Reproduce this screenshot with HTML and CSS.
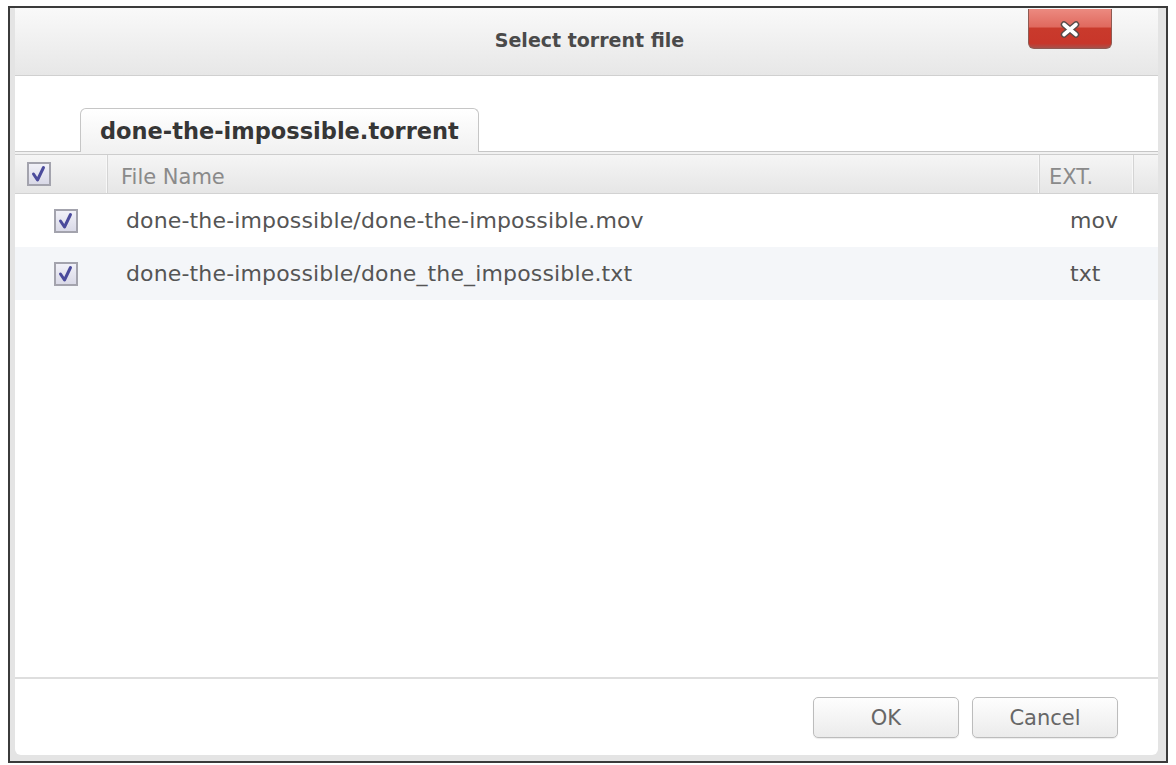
FILE: index.html
```html
<!DOCTYPE html>
<html>
<head>
<meta charset="utf-8">
<title>Select torrent file</title>
<link rel="stylesheet" href="styles.css">
</head>
<body>
<div class="dialog">
  <div class="panel">
    <div class="titlebar">
      <span class="title">Select torrent file</span>
      <button class="close" type="button" aria-label="Close">
        <svg width="20" height="17" viewBox="0 0 20 17">
          <path d="M4 3.5 L16 13.5 M16 3.5 L4 13.5" stroke="#5a4a48" stroke-width="6.5" stroke-linecap="round" fill="none"/>
          <path d="M4 3.5 L16 13.5 M16 3.5 L4 13.5" stroke="#ffffff" stroke-width="3.6" stroke-linecap="round" fill="none"/>
        </svg>
      </button>
    </div>
    <div class="tabbar">
      <div class="tab">done-the-impossible.torrent</div>
    </div>
    <div class="tabstrip"></div>
    <div class="grid">
      <div class="ghead">
        <div class="hcell hcheck"><span class="cb"><svg width="20" height="20" viewBox="0 0 20 20"><path d="M4.5 10 L8.5 16 L14.5 3.5" stroke="#4b4b9c" stroke-width="3" fill="none" stroke-linejoin="round" stroke-linecap="round"/></svg></span></div>
        <div class="hcell hname">File Name</div>
        <div class="hcell hext">EXT.</div>
        <div class="hcell hfill"></div>
      </div>
      <div class="gbody">
        <div class="row">
          <div class="ccheck"><span class="cb"><svg width="20" height="20" viewBox="0 0 20 20"><path d="M4.5 10 L8.5 16 L14.5 3.5" stroke="#4b4b9c" stroke-width="3" fill="none" stroke-linejoin="round" stroke-linecap="round"/></svg></span></div>
          <div class="cname">done-the-impossible/done-the-impossible.mov</div>
          <div class="cext">mov</div>
        </div>
        <div class="row alt">
          <div class="ccheck"><span class="cb"><svg width="20" height="20" viewBox="0 0 20 20"><path d="M4.5 10 L8.5 16 L14.5 3.5" stroke="#4b4b9c" stroke-width="3" fill="none" stroke-linejoin="round" stroke-linecap="round"/></svg></span></div>
          <div class="cname">done-the-impossible/done_the_impossible.txt</div>
          <div class="cext">txt</div>
        </div>
      </div>
    </div>
    <div class="footer">
      <button class="btn" type="button">OK</button>
      <button class="btn" type="button">Cancel</button>
    </div>
  </div>
</div>
</body>
</html>
```
FILE: styles.css
```css
html, body {
  margin: 0;
  padding: 0;
  background: #ffffff;
}

body {
  font-family: "DejaVu Sans", "Liberation Sans", sans-serif;
  width: 1176px;
  height: 765px;
  overflow: hidden;
}

.dialog {
  box-sizing: border-box;
  margin: 6px 0 0 8px;
  width: 1160px;
  height: 757px;
  border: 2px solid #3b3b3b;
  background: #e4e4e4;
  padding: 0 8px 6px 5px;
  display: flex;
}

.panel {
  position: relative;
  flex: 1;
  display: flex;
  flex-direction: column;
  background: #ffffff;
  border-radius: 0 0 6px 6px;
  overflow: hidden;
}

.titlebar {
  position: relative;
  height: 67px;
  flex: none;
  display: flex;
  align-items: center;
  justify-content: center;
  background: linear-gradient(#f9f9f9, #e7e7e7);
  border-bottom: 1px solid #d0d0d0;
}

.title {
  font-weight: bold;
  font-size: 19px;
  color: #4a4a4a;
  padding-left: 6px;
  margin-top: -3px;
}

.close {
  position: absolute;
  top: 1px;
  right: 46px;
  width: 84px;
  height: 40px;
  box-sizing: border-box;
  padding: 0;
  border: 1px solid #8e5a52;
  border-top: none;
  border-radius: 0 0 6px 6px;
  background: linear-gradient(#ec8a80 0%, #e06a5f 45%, #c93a2c 50%, #c8362a 88%, #a8504a 100%);
  display: flex;
  align-items: center;
  justify-content: center;
}

.close svg {
  display: block;
  margin-top: 2px;
}

.tabbar {
  flex: none;
  padding: 32px 0 0 65px;
  border-bottom: 1px solid #c6c6c6;
  display: flex;
}

.tab {
  box-sizing: border-box;
  width: 399px;
  height: 44px;
  margin-bottom: -1px;
  padding: 0 0 0 19px;
  border: 1px solid #c6c6c6;
  border-bottom: none;
  border-radius: 6px 6px 0 0;
  background: linear-gradient(#ffffff, #f1f1f1);
  font-weight: bold;
  font-size: 22.5px;
  color: #363636;
  display: flex;
  align-items: center;
}

.tabstrip {
  flex: none;
  height: 2px;
  background: #f1f1f1;
  border-bottom: 1px solid #cdcdcd;
}

.grid {
  flex: 1;
  display: flex;
  flex-direction: column;
}

.ghead {
  flex: none;
  display: grid;
  grid-template-columns: 93px 932px 94px 1fr;
  height: 38px;
  background: linear-gradient(#f5f5f5, #e6e6e6);
  border-bottom: 1px solid #d2d2d2;
}

.hcell {
  display: flex;
  align-items: center;
  font-size: 21px;
  color: #8a8a8a;
  border-right: 1px solid #d4d4d4;
  box-shadow: inset -1px 0 0 #f8f8f8;
}

.hcheck {
  padding-left: 12px;
}

.hname {
  padding: 5px 0 0 13px;
}

.hext {
  padding: 5px 0 0 9px;
}

.hfill {
  border-right: none;
  box-shadow: none;
}

.cb {
  box-sizing: border-box;
  width: 24px;
  height: 24px;
  border: 2px solid #a3a3ad;
  background: linear-gradient(#f1f1f8, #d9d9e7);
  display: flex;
  align-items: center;
  justify-content: center;
}

.cb svg {
  display: block;
}

.gbody {
  flex: 1;
}

.row {
  display: grid;
  grid-template-columns: 93px 932px 94px;
  height: 53px;
  align-items: center;
  font-size: 22px;
  color: #555555;
}

.row.alt {
  background: #f4f6f9;
}

.ccheck {
  padding-left: 39px;
  display: flex;
}

.cname {
  padding-left: 18px;
  letter-spacing: 0.15px;
}

.cext {
  padding-left: 30px;
}

.footer {
  flex: none;
  display: flex;
  justify-content: flex-end;
  gap: 13px;
  padding: 18px 40px 17px 0;
  border-top: 2px solid #dedede;
}

.btn {
  box-sizing: border-box;
  width: 146px;
  height: 41px;
  border: 1px solid #bcbcbc;
  border-radius: 5px;
  background: linear-gradient(#fefefe, #ebebeb);
  font-family: "DejaVu Sans", "Liberation Sans", sans-serif;
  font-size: 21px;
  color: #676767;
  padding: 0;
  box-shadow: 0 1px 1px rgba(0, 0, 0, 0.08);
}
```
